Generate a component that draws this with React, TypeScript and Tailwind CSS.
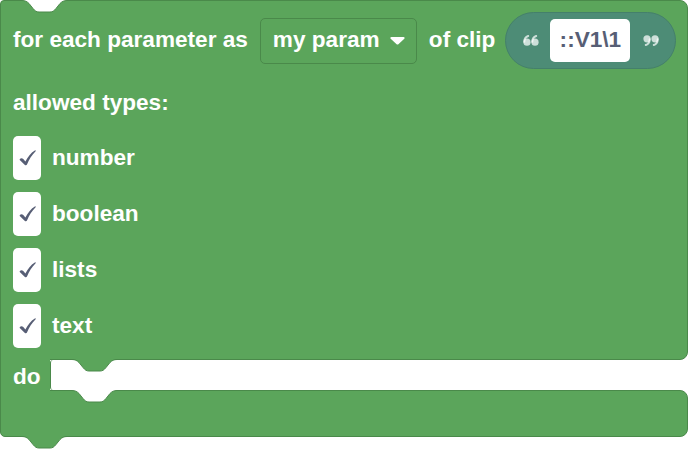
import React from 'react';

// one Blockly-style notch: 45 wide, 12 deep, drawn from the edge downwards
function Notch({ fill, className }: { fill: string; className: string }) {
  const curve =
    'M0,0.5 C3,0.5 5,1.5 7,3.5 L11,8.5 C13,11 14.5,12 17,12 L28,12 C30.5,12 32,11 34,8.5 L38,3.5 C40,1.5 42,0.5 45,0.5';
  return (
    <svg width="45" height="13" viewBox="0 0 45 13" className={className}>
      <path d={curve + ' L45,0 L0,0 Z'} fill={fill} />
      <path d={curve} fill="none" stroke="#4a894a" strokeWidth="1" />
    </svg>
  );
}

function Quote({ close }: { close?: boolean }) {
  return (
    <svg width="16" height="11" viewBox="0 0 16 11" className={close ? 'rotate-180' : ''}>
      <g fill="#ffffff" fillOpacity="0.72">
        <circle cx="4" cy="7.2" r="3.6" />
        <circle cx="12" cy="7.2" r="3.6" />
      </g>
      <g fill="none" stroke="#ffffff" strokeOpacity="0.72" strokeWidth="2" strokeLinecap="round">
        <path d="M1.3,6.8 C1.3,3.6 2.8,1.8 5.2,1" />
        <path d="M9.3,6.8 C9.3,3.6 10.8,1.8 13.2,1" />
      </g>
    </svg>
  );
}

function CheckRow({ label }: { label: string }) {
  return (
    <div className="flex items-center h-[44px] gap-[11px]">
      <div className="w-[28px] h-[44px] rounded-[5px] bg-white flex items-center justify-center">
        <svg width="17" height="16" viewBox="0 0 17 16">
          <path
            d="M0.9,8.9 C1.8,7.9 3.3,8 4.3,9.1 L6.4,11.6 C8.8,6.8 11.8,2.8 15.8,0.4 C16.5,0 17.1,0.6 16.6,1.2 C12.9,4.8 10.2,9.4 8,14.6 C7.6,15.5 6.5,15.6 5.9,14.9 L1,10.3 C0.6,9.9 0.6,9.3 0.9,8.9 Z"
            fill="#575e75"
          />
        </svg>
      </div>
      <span>{label}</span>
    </div>
  );
}

export default function App() {
  return (
    <div className="w-[689px] h-[450px] bg-white font-['Liberation_Sans',Arial,sans-serif] font-bold text-[22.6px] text-white leading-none">
      {/* top arm */}
      <div className="relative w-[688px] bg-[#5ba55b] border border-[#4a894a] rounded-tl-[4px] rounded-tr-[8px] rounded-br-[8px] pl-[12px] pt-[11px] pb-[11px]">
        <Notch fill="#ffffff" className="absolute top-[-1px] left-[21px]" />

        <div className="flex items-center h-[57px] gap-[12px]">
          <span>for each parameter as</span>
          <div className="h-[46px] w-[157px] border border-[#4a894a] rounded-[5px] flex items-center pl-[12px] pr-[11px] justify-between">
            <span>my param</span>
            <svg width="15" height="9" viewBox="0 0 15 9">
              <path d="M1.5,1 L13.5,1 C14.5,1 15,2 14.3,2.8 L8.4,8.2 C7.9,8.7 7.1,8.7 6.6,8.2 L0.7,2.8 C0,2 0.5,1 1.5,1 Z" fill="#ffffff" />
            </svg>
          </div>
          <span>of clip</span>
          <div className="h-[57px] w-[171px] -ml-[2px] rounded-full bg-[#4d8c76] border border-[#44806b] flex items-center pl-[17px]">
            <Quote />
            <div className="ml-[11px] w-[80px] h-[43px] rounded-[5px] bg-white flex items-center justify-center text-[#575e75]">
              ::V1\1
            </div>
            <div className="ml-[13px]">
              <Quote close />
            </div>
          </div>
        </div>

        <div className="flex items-center h-[44px] mt-[12px]">allowed types:</div>

        <div className="flex flex-col gap-[12px] mt-[11px]">
          <CheckRow label="number" />
          <CheckRow label="boolean" />
          <CheckRow label="lists" />
          <CheckRow label="text" />
        </div>
      </div>

      {/* do row */}
      <div className="flex h-[30px]">
        <div className="relative z-10 -my-px w-[50px] h-[32px] bg-[#5ba55b] border-l border-[#4a894a] flex items-center pl-[12px] pt-[4px]">
          do
        </div>
        <div className="relative flex-1 h-[30px] bg-white border-l border-[#4a894a] rounded-l-[3px]">
          <Notch fill="#5ba55b" className="absolute top-[-1px] left-[21px]" />
        </div>
      </div>

      {/* bottom arm */}
      <div className="relative w-[688px] h-[47px] bg-[#5ba55b] border border-[#4a894a] rounded-tr-[8px] rounded-br-[8px] rounded-bl-[5px]">
        <Notch fill="#ffffff" className="absolute top-[-1px] left-[71px]" />
        <Notch fill="#5ba55b" className="absolute top-full left-[21px]" />
      </div>
    </div>
  );
}
